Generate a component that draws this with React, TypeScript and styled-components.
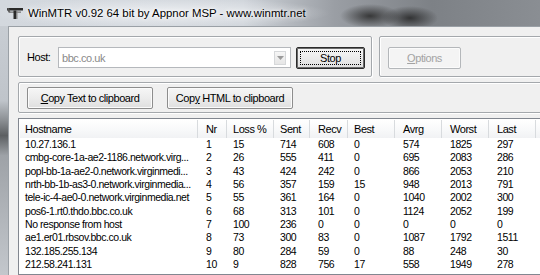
import React from "react";
import styled, { createGlobalStyle } from "styled-components";

const GlobalStyle = createGlobalStyle`
  html, body { margin: 0; padding: 0; overflow: hidden; background: #6e7378; }
  * { box-sizing: border-box; }
`;

const UI_FONT = `"Liberation Sans", Arial, sans-serif`;

const Window = styled.div`
  width: 540px;
  height: 275px;
  display: flex;
  flex-direction: column;
  overflow: hidden;
  background: linear-gradient(90deg, #c9ced4 0%, #b9bec4 40%, #8e9298 70%, #6f7378 100%);
`;

const TitleBar = styled.div`
  height: 26px;
  flex: none;
  display: flex;
  align-items: center;
  gap: 4px;
  padding-left: 6px;
  background:
    radial-gradient(ellipse 30px 12px at 370px 16px, rgba(40,40,40,0.85), rgba(40,40,40,0) 100%),
    radial-gradient(ellipse 28px 12px at 410px 18px, rgba(30,30,30,0.8), rgba(30,30,30,0) 100%),
    radial-gradient(ellipse 170px 16px at 160px 13px, rgba(240,242,245,0.9), rgba(240,242,245,0) 100%),
    linear-gradient(90deg, #d3d8de 0%, #cfd4da 45%, #9a9ea4 62%, #7d8186 80%, #8a8e93 100%);
`;

const TitleText = styled.span`
  font-family: "Liberation Sans", Arial, sans-serif;
  font-size: 11.4px;
  color: #000;
  white-space: nowrap;
  text-shadow: 0 0 6px #fff, 0 0 3px #fff;
`;

const Body = styled.div`
  flex: 1;
  display: flex;
  min-height: 0;
`;

const SideFrame = styled.div`
  width: 8px;
  flex: none;
  background: linear-gradient(180deg, #c8cdd3 0%, #bfc4ca 30%, #8a8e92 38%, #5c5f62 44%, #9ea2a7 52%, #c3c7cc 100%);
`;

const Client = styled.div`
  flex: 1;
  min-width: 0;
  background: #f0f0f0;
  border-top: 1px solid #9aa0a6;
  border-left: 1px solid #9aa0a6;
  padding: 9px 0 0 9px;
  display: flex;
  flex-direction: column;
  overflow: hidden;
  font-family: ${UI_FONT};
  font-size: 10.5px;
  letter-spacing: -0.45px;
`;

const TopRow = styled.div`
  display: flex;
  gap: 7px;
  height: 41px;
  flex: none;
`;

const GroupBox = styled.div<{ $width: number }>`
  width: ${(p) => p.$width}px;
  flex: none;
  border: 1px solid #a4a8ac;
  border-radius: 2px;
  box-shadow: inset 1px 1px 0 #fff, 1px 1px 0 #fff;
  display: flex;
  align-items: flex-start;
`;

const HostGroup = styled(GroupBox)`
  padding: 10px 0 0 8px;
`;

const OptionsGroup = styled(GroupBox)`
  padding: 10px 0 0 8px;
`;

const CopyGroup = styled(GroupBox)`
  margin-top: 5px;
  height: 31px;
  padding: 4px 0 0 8px;
  gap: 14px;
`;

const HostLabel = styled.span`
  color: #000;
  line-height: 21px;
  width: 31px;
  flex: none;
  font-size: 11px;
`;

const Combo = styled.div`
  width: 233px;
  height: 21px;
  border: 1px solid #b5b8bc;
  background: #fff;
  display: flex;
  align-items: center;
  padding: 0 4px 0 3px;
  margin-right: 5px;
`;

const ComboText = styled.span`
  flex: 1;
  color: #8a8a8a;
  font-size: 11px;
`;

const ComboArrow = styled.div`
  width: 12px;
  height: 14px;
  border: 1px solid #d6d8da;
  background: linear-gradient(#f6f6f6, #e6e6e6);
  display: flex;
  align-items: center;
  justify-content: center;
`;

const Button = styled.div<{ $width: number; $disabled?: boolean; $default?: boolean }>`
  position: relative;
  width: ${(p) => p.$width}px;
  height: 22px;
  flex: none;
  display: flex;
  align-items: center;
  justify-content: center;
  border: 1px solid ${(p) => (p.$default ? "#2b2b2b" : p.$disabled ? "#b4b7ba" : "#8d8d8d")};
  border-radius: 2px;
  background: ${(p) => (p.$disabled ? "#f4f4f4" : "linear-gradient(#f6f6f6 0%, #ececec 50%, #dfdfdf 100%)")};
  color: ${(p) => (p.$disabled ? "#a3a3a3" : "#000")};
  box-shadow: ${(p) => (p.$default ? "inset 0 0 0 1px #6a6a6a" : "inset 0 0 0 1px #fbfbfb")};
  font-size: 11px;
  white-space: nowrap;
`;

const FocusRect = styled.div`
  position: absolute;
  inset: 3px;
  border: 1px dotted #000;
`;

const Mnemonic = styled.span`
  text-decoration: underline;
`;

const ListView = styled.div`
  margin-top: 5px;
  flex: 1;
  min-height: 0;
  width: 540px;
  background: #fff;
  border: 1px solid #828790;
  padding: 1px 0 0 1px;
  color: #000;
  overflow: hidden;
`;

const COLS = [
  { w: 178, pad: 5 },
  { w: 29, pad: 8 },
  { w: 47, pad: 6 },
  { w: 36, pad: 6 },
  { w: 38, pad: 8 },
  { w: 47, pad: 6 },
  { w: 47, pad: 8 },
  { w: 47, pad: 8 },
  { w: 47, pad: 8 },
  { w: 60, pad: 6 },
];

const gridTemplate = COLS.map((c) => `${c.w}px`).join(" ");

const HeaderRow = styled.div`
  display: grid;
  grid-template-columns: ${gridTemplate};
  height: 18px;
  background: linear-gradient(#ffffff 0%, #f7f8f9 60%, #f1f2f4 100%);
`;

const HeaderCell = styled.div<{ $pad: number }>`
  padding-left: ${(p) => p.$pad}px;
  line-height: 18px;
  border-right: 1px solid #d8dbde;
  white-space: nowrap;
  overflow: hidden;
  font-size: 11px;
`;

const DataRow = styled.div`
  display: grid;
  grid-template-columns: ${gridTemplate};
  height: 13.33px;
`;

const Cell = styled.div<{ $pad: number }>`
  padding-left: ${(p) => p.$pad}px;
  line-height: 13.33px;
  white-space: nowrap;
  overflow: hidden;
`;

const HEADERS = ["Hostname", "Nr", "Loss %", "Sent", "Recv", "Best", "Avrg", "Worst", "Last", ""];

const ROWS: string[][] = [
  ["10.27.136.1", "1", "15", "714", "608", "0", "574", "1825", "297"],
  ["cmbg-core-1a-ae2-1186.network.virg...", "2", "26", "555", "411", "0", "695", "2083", "286"],
  ["popl-bb-1a-ae2-0.network.virginmedi...", "3", "43", "424", "242", "0", "866", "2053", "210"],
  ["nrth-bb-1b-as3-0.network.virginmedia...", "4", "56", "357", "159", "15", "948", "2013", "791"],
  ["tele-ic-4-ae0-0.network.virginmedia.net", "5", "55", "361", "164", "0", "1040", "2002", "300"],
  ["pos6-1.rt0.thdo.bbc.co.uk", "6", "68", "313", "101", "0", "1124", "2052", "199"],
  ["No response from host", "7", "100", "236", "0", "0", "0", "0", "0"],
  ["ae1.er01.rbsov.bbc.co.uk", "8", "73", "300", "83", "0", "1087", "1792", "1511"],
  ["132.185.255.134", "9", "80", "284", "59", "0", "88", "248", "30"],
  ["212.58.241.131", "10", "9", "828", "756", "17", "558", "1949", "278"],
];

const AppIcon = () => (
  <svg width="18" height="16" viewBox="0 0 18 16">
    <path d="M1 3 L17 3 L17 5.5 L1 5.5 Z" fill="#2a2a2a" />
    <path d="M1 3 L3 3 L4.5 7.5 L2.5 7.5 Z" fill="#555" />
    <path d="M3 6.5 L15 6.5 L15 7.8 L3 7.8 Z" fill="#777" />
    <path d="M7.5 5.5 L10.5 5.5 L10.5 14 L7.5 14 Z" fill="#2a2a2a" />
    <path d="M10.5 5.5 L11.5 5.5 L11.5 14 L10.5 14 Z" fill="#888" />
  </svg>
);

const ArrowIcon = () => (
  <svg width="7" height="4" viewBox="0 0 7 4">
    <path d="M0 0 L7 0 L3.5 4 Z" fill="#9a9a9a" />
  </svg>
);

export default function App() {
  return (
    <>
      <GlobalStyle />
      <Window>
        <TitleBar>
          <AppIcon />
          <TitleText>WinMTR v0.92 64 bit by Appnor MSP - www.winmtr.net</TitleText>
        </TitleBar>
        <Body>
          <SideFrame />
          <Client>
            <TopRow>
              <HostGroup $width={354}>
                <HostLabel>Host:</HostLabel>
                <Combo>
                  <ComboText>bbc.co.uk</ComboText>
                  <ComboArrow>
                    <ArrowIcon />
                  </ComboArrow>
                </Combo>
                <Button $width={69} $default>
                  <FocusRect />
                  Stop
                </Button>
              </HostGroup>
              <OptionsGroup $width={200}>
                <Button $width={73} $disabled>
                  <span>
                    <Mnemonic>O</Mnemonic>ptions
                  </span>
                </Button>
              </OptionsGroup>
            </TopRow>
            <CopyGroup $width={560}>
              <Button $width={126}>
                <span>
                  <Mnemonic>C</Mnemonic>opy Text to clipboard
                </span>
              </Button>
              <Button $width={126}>
                <span>
                  Cop<Mnemonic>y</Mnemonic> HTML to clipboard
                </span>
              </Button>
            </CopyGroup>
            <ListView>
              <HeaderRow>
                {HEADERS.map((h, i) => (
                  <HeaderCell key={i} $pad={COLS[i].pad}>
                    {h}
                  </HeaderCell>
                ))}
              </HeaderRow>
              {ROWS.map((r, ri) => (
                <DataRow key={ri}>
                  {r.map((v, ci) => (
                    <Cell key={ci} $pad={COLS[ci].pad}>
                      {v}
                    </Cell>
                  ))}
                </DataRow>
              ))}
            </ListView>
          </Client>
        </Body>
      </Window>
    </>
  );
}
